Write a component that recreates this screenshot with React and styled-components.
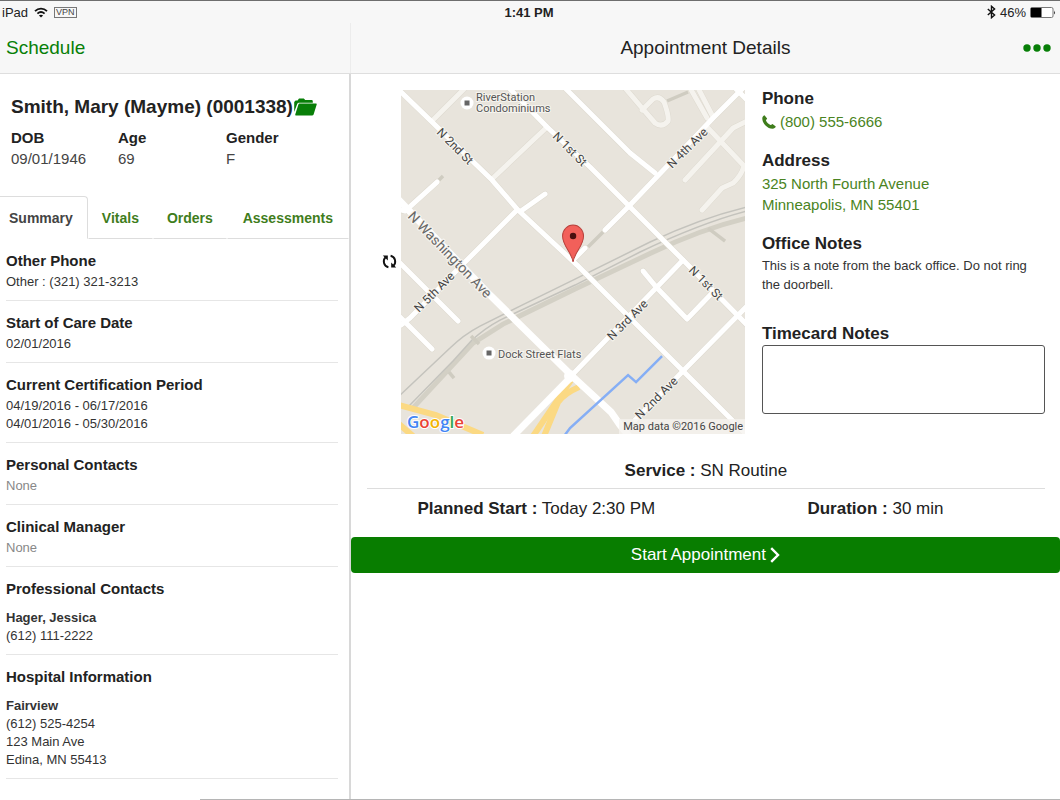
import React, { useState } from 'react';
import styled, { createGlobalStyle } from 'styled-components';

const tabs = ['Summary', 'Vitals', 'Orders', 'Assessments'];

const patientFacts = [
  { label: 'DOB', value: '09/01/1946' },
  { label: 'Age', value: '69' },
  { label: 'Gender', value: 'F' },
];

const sections = [
  { title: 'Other Phone', lines: ['Other : (321) 321-3213'] },
  { title: 'Start of Care Date', lines: ['02/01/2016'] },
  {
    title: 'Current Certification Period',
    lines: ['04/19/2016 - 06/17/2016', '04/01/2016 - 05/30/2016'],
  },
  { title: 'Personal Contacts', lines: [] },
  { title: 'Clinical Manager', lines: [] },
  { title: 'Professional Contacts', name: 'Hager, Jessica', lines: ['(612) 111-2222'] },
  {
    title: 'Hospital Information',
    name: 'Fairview',
    lines: ['(612) 525-4254', '123 Main Ave', 'Edina, MN 55413'],
  },
];

const GlobalStyle = createGlobalStyle`
  * {
    box-sizing: border-box;
  }

  body {
    margin: 0;
    background-color: #fff;
    color: #222;
    font-family: "Liberation Sans", Arial, sans-serif;
    font-size: 15px;
  }

  button {
    font-family: inherit;
    cursor: pointer;
  }

  h1, h2, h3, p, dl, dd {
    margin: 0;
  }
`;

const Page = styled.div`
  min-height: 100vh;
  display: flex;
  flex-direction: column;
`;

const TopBar = styled.header`
  background-color: #f7f7f7;
  border-top: 1px solid #6e6e6e;
  border-bottom: 1px solid #dedede;
`;

const StatusBar = styled.div`
  display: grid;
  grid-template-columns: 1fr auto 1fr;
  align-items: center;
  height: 22px;
  padding: 0 4px 0 2px;
  font-size: 13px;
  color: #222;
`;

const StatusGroup = styled.div`
  display: flex;
  align-items: center;
  gap: ${props => props.$gap};
  justify-content: ${props => (props.$end ? 'flex-end' : 'flex-start')};
`;

const Clock = styled.span`
  font-weight: 700;
`;

const VpnBadge = styled.span`
  border: 1px solid #777;
  padding: 0 1px;
  font-size: 9px;
  line-height: 9px;
  color: #444;
`;

const NavBar = styled.nav`
  display: grid;
  grid-template-columns: calc(33% + 1px) 1fr;
  height: 50px;
`;

const NavLeft = styled.div`
  display: flex;
  align-items: center;
  padding-left: 6px;
  border-right: 1px solid #ececec;
`;

const NavRight = styled.div`
  display: grid;
  grid-template-columns: 40px 1fr 40px;
  align-items: center;
`;

const BackLink = styled.a`
  color: #087f08;
  font-size: 19px;
  text-decoration: none;
`;

const PageTitle = styled.h1`
  grid-column: 2;
  text-align: center;
  font-size: 19px;
  font-weight: 400;
`;

const MenuButton = styled.button`
  display: flex;
  justify-content: flex-end;
  border: none;
  background: none;
  padding: 0 9px 0 0;
`;

const Body = styled.div`
  flex: 1;
  display: grid;
  grid-template-columns: calc(33% + 1px) 1fr;
`;

const Sidebar = styled.aside`
  border-right: 2px solid #d8d8d8;
`;

const Patient = styled.section`
  padding: 22px 11px 27px;
`;

const PatientName = styled.h2`
  display: flex;
  align-items: center;
  gap: 1px;
  font-size: 19px;
  line-height: 22px;
  white-space: nowrap;
`;

const FolderButton = styled.button`
  display: flex;
  border: none;
  background: none;
  padding: 0;
`;

const Facts = styled.dl`
  display: grid;
  grid-template-columns: 107px 108px 1fr;
  margin-top: 9px;
  line-height: 21px;

  dt {
    font-weight: 700;
  }

  dd {
    color: #444;
  }
`;

const TabList = styled.div`
  display: flex;
`;

const Tab = styled.button`
  height: 43px;
  padding: 0 13px;
  border: 1px solid transparent;
  border-bottom-color: #ddd;
  background: none;
  color: #3f7d1c;
  font-size: 14px;
  font-weight: 700;
  white-space: nowrap;

  &:first-child {
    padding: 0 14px 0 9px;
    border-left: none;
  }

  &:last-child {
    flex: 1;
  }

  &[aria-selected='true'] {
    color: #444;
    border-color: #ddd;
    border-bottom-color: transparent;
    border-radius: 0 4px 0 0;
  }
`;

const SectionList = styled.div`
  padding: 0 11px 0 6px;
`;

const Section = styled.section`
  padding: 12px 0 9px;
  border-bottom: 1px solid #e6e6e6;
`;

const SectionTitle = styled.h3`
  font-size: 15px;
  line-height: 20px;
  margin-bottom: ${props => (props.$spaced ? '10px' : '2px')};
`;

const Line = styled.p`
  font-size: 13px;
  line-height: 18px;
  font-weight: ${props => (props.$bold ? 700 : 400)};
  color: ${props => (props.$muted ? '#888' : '#333')};
`;

const Main = styled.main`
  padding-bottom: 16px;
`;

const Details = styled.div`
  display: grid;
  grid-template-columns: 34px minmax(0, 344fr) minmax(0, 300fr);
  padding: 14px 15px 0 16px;
`;

const RefreshButton = styled.button`
  align-self: center;
  display: flex;
  justify-content: flex-end;
  border: none;
  background: none;
  padding: 0 4px 0 0;
`;

const MapFrame = styled.div`
  padding-top: 2px;

  svg {
    display: block;
    width: 100%;
    height: auto;
  }
`;

const Info = styled.div`
  padding-left: 17px;
`;

const InfoBlock = styled.section`
  margin-bottom: ${props => (props.$wide ? '29px' : '18px')};
`;

const InfoTitle = styled.h3`
  font-size: 17px;
  line-height: 22px;
  margin-bottom: 1px;
`;

const InfoLink = styled.a`
  display: flex;
  align-items: center;
  gap: 4px;
  color: #4a8423;
  font-size: 15px;
  line-height: 21px;
  text-decoration: none;
`;

const Note = styled.p`
  font-size: 13px;
  line-height: 19px;
  color: #333;
`;

const NotesLabel = styled.label`
  display: block;
  font-size: 17px;
  font-weight: 700;
  line-height: 22px;
`;

const NotesInput = styled.textarea`
  display: block;
  width: 100%;
  height: 69px;
  border: 1px solid #555;
  border-radius: 3px;
  background-color: #fff;
  padding: 6px;
  font-family: inherit;
  font-size: 13px;
  resize: none;
`;

const Summary = styled.section`
  margin: 26px 15px 0 16px;
  font-size: 17px;
  line-height: 22px;
  text-align: center;
`;

const ServiceRow = styled.p`
  padding-bottom: 6px;
  border-bottom: 1px solid #ddd;
`;

const TimeRow = styled.div`
  display: grid;
  grid-template-columns: 1fr 1fr;
  padding: 9px 0 17px;
`;

const StartButton = styled.button`
  width: 100%;
  height: 36px;
  display: flex;
  align-items: center;
  justify-content: center;
  gap: 4px;
  border: none;
  border-radius: 4px;
  background-color: #087d00;
  color: #fff;
  font-size: 17px;
`;

const BottomEdge = styled.div`
  height: 1px;
  margin-left: 200px;
  background-color: #b5b5b5;
`;

const WifiIcon = () => (
  <svg width="14" height="11" viewBox="0 0 14 11" fill="none" stroke="#111" strokeWidth="1.8">
    <path d="M1 4.2 C4.5 0.8 9.5 0.8 13 4.2" />
    <path d="M3.4 6.6 C5.5 4.7 8.5 4.7 10.6 6.6" />
    <path d="M7 10.6 L4.9 8.5 C6.1 7.4 7.9 7.4 9.1 8.5 Z" fill="#111" stroke="none" />
  </svg>
);

const BluetoothIcon = () => (
  <svg width="9" height="14" viewBox="0 0 9 14" fill="none" stroke="#111" strokeWidth="1.4">
    <path d="M0.8 3.9 L7.6 10 L4.5 12.7 V1.3 L7.6 4 L0.8 10.1" />
  </svg>
);

const BatteryIcon = () => (
  <svg width="26" height="11" viewBox="0 0 26 11">
    <rect x="0.5" y="0.5" width="22.5" height="10" rx="1.5" fill="#fff" stroke="#777" />
    <rect x="1" y="1" width="10.5" height="9" fill="#000" />
    <path d="M24 3.5 Q25.8 5.5 24 7.5 Z" fill="#333" />
  </svg>
);

const DotsIcon = () => (
  <svg width="28" height="8" viewBox="0 0 28 8" fill="#087f08">
    <circle cx="4" cy="4" r="3.7" />
    <circle cx="14" cy="4" r="3.7" />
    <circle cx="24" cy="4" r="3.7" />
  </svg>
);

const FolderIcon = () => (
  <svg width="23" height="18" viewBox="0 0 23 18" fill="#087f08">
    <path d="M0.2 14 V4 L1.6 2.6 H3.6 L5 0.4 H9.8 L11.2 2 H17.6 Q18.8 2 18.8 3.2 V4.8 H4.6 L3.4 5.6 Z" />
    <path d="M5.4 5.6 H22 Q23 5.6 22.7 6.6 L19.6 16.4 Q19.2 17.5 18 17.5 H2 Q0.8 17.5 1.3 16.2 L4.4 6.4 Q4.7 5.6 5.4 5.6 Z" />
  </svg>
);

const PhoneIcon = () => (
  <svg width="14" height="14" viewBox="0 0 14 14" fill="#3f7d1c">
    <path d="M0.3 3.4 C0.3 1.8 1.2 0.7 2.5 0.2 L5.1 3.5 C5.2 4.2 3.9 4.6 4 5.4 C4.7 7.2 6.8 9.3 8.6 10 C9.4 10.1 9.8 8.8 10.5 8.9 L13.8 11.5 C13.3 12.8 12.2 13.6 10.6 13.7 C5.4 13.6 0.4 8.6 0.3 3.4 Z" />
  </svg>
);

const RefreshIcon = () => (
  <svg width="15" height="15" viewBox="0 0 15 15" fill="none" stroke="#111" strokeWidth="1.9">
    <path d="M6.4 13.2 C1.6 12.2 0.4 6.4 3.6 3.2" />
    <path d="M8.6 1.8 C13.4 2.8 14.6 8.6 11.4 11.8" />
    <path d="M0.8 1.4 H5.8 V6.4 Z" fill="#111" stroke="none" />
    <path d="M14.2 13.6 H9.2 V8.6 Z" fill="#111" stroke="none" />
  </svg>
);

const ChevronIcon = () => (
  <svg width="10" height="16" viewBox="0 0 10 16" fill="none" stroke="#fff" strokeWidth="2.4">
    <path d="M1.2 1.2 L8 8 L1.2 14.8" />
  </svg>
);

const roads = [
  'M-2 0 L91 90 L117 120 L176 175 L282 281 L345 344',
  'M108 -2 L146 37 L189 77 L228 116 L281 169 L346 235',
  'M164 -2 L209 43 L229 63 L254 83',
  'M346 -6 L312 28 L228 116 L204 140',
  'M334 -2 L346 10',
  'M184 158 L172 170',
  'M0 235 L9 228 L61 175 L116 120',
  'M120 121 L144 104',
  'M0 120 L4 121 L36 92',
  'M-2 172 L57 231',
  'M-2 226 L31 259',
  'M171 285 L282 170',
  'M242 181 L256 198 L286 229 L312 202',
  'M346 216 L282 281 L234 330',
];

const sideRoads = [
  'M32 30 L64 -2',
  'M91 89 L146 37',
  'M224 -2 L241 18 L254 33 Q261 38 267 31 Q268 26 263 12 Q258 5 252 9 L241 20',
  'M289 -2 L306 28 M297 -2 L312 27 M306 37 L343 76',
  'M346 31 L332 38 L284 90',
  'M343 76 Q340 86 332 93 L321 98 L301 120',
];

const StreetMap = () => (
  <svg viewBox="0 0 344 344" role="img" aria-label="Map of the visit address">
    <rect width="344" height="344" fill="#e8e4dc" />

    {/* railway */}
    <g fill="none">
      <path d="M10 320 L72 253 L102 234 L174 199 L250 163 Q300 139 346 128" stroke="#d3d0c5" strokeWidth="5" />
      <path d="M-2 306 L49 258 Q62 245 79 236 L121 215 L174 189 L249 152 Q300 128 346 117" stroke="#c4c3bd" strokeWidth="1.5" />
      <path d="M8 316 L52 271 L71 250 Q84 238 99 230 L174 195 L239 162 Q300 133 346 121" stroke="#c4c3bd" strokeWidth="1.5" />
      <path d="M307 138 L324 151 M203 141 L187 157 M36 92 L42 86 M266 11 L287 2 M70 246 L78 254 M48 282 L53 288" stroke="#cfccc1" strokeWidth="3.5" />
    </g>

    <g fill="none" stroke="#dedad0" strokeWidth="6" strokeLinecap="round" strokeLinejoin="round">
      {[...sideRoads, ...roads].map(d => <path key={d} d={d} />)}
    </g>
    <g fill="none" stroke="#f5f3ee" strokeWidth="5" strokeLinecap="round" strokeLinejoin="round">
      {sideRoads.map(d => <path key={d} d={d} />)}
    </g>
    <g fill="none" stroke="#fff" strokeWidth="5" strokeLinecap="round" strokeLinejoin="round">
      {roads.map(d => <path key={d} d={d} />)}
    </g>

    {/* highway ramps */}
    <g fill="none" stroke="#fbd983" strokeWidth="6">
      <path d="M170 290 L132 346" />
      <path d="M178 297 Q164 303 157 312 L143 346" />
      <path d="M-2 315 L35 325 L82 345" />
      <path d="M-2 334 L12 346" />
    </g>
    <g fill="none" stroke="#fff" strokeWidth="7">
      <path d="M-4 108 L89 205 L171 286 L210 322 L219 335 L228 346" />
      <path d="M171 286 L112 346" />
    </g>
    <circle cx="169" cy="286" r="6" fill="#fff" />
    <path d="M163 346 L169 338 L227 285 L235 292 L261 266" fill="none" stroke="#85aef5" strokeWidth="2.5" />

    <g fontFamily="Roboto, sans-serif" fontSize="12" fill="#444" stroke="#f6f4ef" strokeWidth="2" paintOrder="stroke">
      <text transform="translate(35 43) rotate(45)">N 2nd St</text>
      <text transform="translate(151 47) rotate(45)">N 1st St</text>
      <text transform="translate(271 79) rotate(-45)">N 4th Ave</text>
      <text transform="translate(18 223) rotate(-45)">N 5th Ave</text>
      <text transform="translate(287 181) rotate(45)">N 1st St</text>
      <text transform="translate(211 251) rotate(-45)">N 3rd Ave</text>
      <text transform="translate(239 330) rotate(-45)">N 2nd Ave</text>
      <text transform="translate(6 127) rotate(46)" fontSize="14" fill="#666">N Washington Ave</text>
    </g>

    <g fontFamily="Roboto, sans-serif" fontSize="11" fill="#555" stroke="#f6f4ef" strokeWidth="2" paintOrder="stroke">
      <text x="75" y="11">RiverStation</text>
      <text x="75" y="22">Condominiums</text>
      <text x="97" y="268">Dock Street Flats</text>
    </g>
    <g fill="#fff">
      <circle cx="66" cy="13" r="6.5" />
      <circle cx="88" cy="263" r="6.5" />
    </g>
    <path d="M63.5 10.5 h5 v5 h-5 Z M85.5 260.5 h5 v5 h-5 Z" fill="#666" />

    {/* pin */}
    <path d="M172 172 C171 163 161.500 156 161.500 146 A10.500 11 0 0 1 182.500 146 C182.500 156 173 163 172 172 Z" fill="#f2605a" stroke="#b8423d" />
    <circle cx="172" cy="146" r="3.2" fill="#4a0f0f" />

    <text x="6" y="338" fontFamily="'Open Sans', sans-serif" fontSize="17" fontWeight="600" stroke="#fff" strokeWidth="2" paintOrder="stroke">
      <tspan fill="#4285f4">G</tspan>
      <tspan fill="#ea4335">o</tspan>
      <tspan fill="#f4b400">o</tspan>
      <tspan fill="#4285f4">g</tspan>
      <tspan fill="#34a853">l</tspan>
      <tspan fill="#ea4335">e</tspan>
    </text>

    <rect x="218" y="329" width="126" height="15" fill="#f5f3ef" fillOpacity="0.8" />
    <text x="342" y="340" textAnchor="end" fontFamily="Roboto, sans-serif" fontSize="11" fill="#444">
      Map data ©2016 Google
    </text>
  </svg>
);

const PatientSection = ({ title, name, lines }) => (
  <Section>
    <SectionTitle $spaced={Boolean(name)}>{title}</SectionTitle>
    {name && <Line $bold>{name}</Line>}
    {lines.map(line => <Line key={line}>{line}</Line>)}
    {lines.length === 0 && <Line $muted>None</Line>}
  </Section>
);

const App = () => {
  const [activeTab, setActiveTab] = useState('Summary');
  const [notes, setNotes] = useState('');

  return (
    <Page>
      <GlobalStyle />
      <TopBar>
        <StatusBar>
          <StatusGroup $gap="6px">
            <span>iPad</span>
            <WifiIcon />
            <VpnBadge>VPN</VpnBadge>
          </StatusGroup>
          <Clock>1:41 PM</Clock>
          <StatusGroup $gap="4px" $end>
            <BluetoothIcon />
            <span>46%</span>
            <BatteryIcon />
          </StatusGroup>
        </StatusBar>
        <NavBar>
          <NavLeft>
            <BackLink href="#schedule">Schedule</BackLink>
          </NavLeft>
          <NavRight>
            <PageTitle>Appointment Details</PageTitle>
            <MenuButton aria-label="More"><DotsIcon /></MenuButton>
          </NavRight>
        </NavBar>
      </TopBar>

      <Body>
        <Sidebar>
          <Patient>
            <PatientName>
              Smith, Mary (Mayme) (0001338)
              <FolderButton aria-label="Open chart"><FolderIcon /></FolderButton>
            </PatientName>
            <Facts>
              {patientFacts.map(fact => (
                <div key={fact.label}>
                  <dt>{fact.label}</dt>
                  <dd>{fact.value}</dd>
                </div>
              ))}
            </Facts>
          </Patient>

          <TabList role="tablist">
            {tabs.map(tab => (
              <Tab
                key={tab}
                role="tab"
                aria-selected={activeTab === tab}
                onClick={() => setActiveTab(tab)}
              >
                {tab}
              </Tab>
            ))}
          </TabList>

          <SectionList>
            {sections.map(section => (
              <PatientSection key={section.title} {...section} />
            ))}
          </SectionList>
        </Sidebar>

        <Main>
          <Details>
            <RefreshButton aria-label="Refresh map"><RefreshIcon /></RefreshButton>
            <MapFrame><StreetMap /></MapFrame>
            <Info>
              <InfoBlock>
                <InfoTitle>Phone</InfoTitle>
                <InfoLink href="tel:8005556666"><PhoneIcon />(800) 555-6666</InfoLink>
              </InfoBlock>
              <InfoBlock>
                <InfoTitle>Address</InfoTitle>
                <InfoLink href="#directions">
                  325 North Fourth Avenue<br />
                  Minneapolis, MN 55401
                </InfoLink>
              </InfoBlock>
              <InfoBlock $wide>
                <InfoTitle>Office Notes</InfoTitle>
                <Note>This is a note from the back office. Do not ring the doorbell.</Note>
              </InfoBlock>
              <NotesLabel htmlFor="timecard-notes">Timecard Notes</NotesLabel>
              <NotesInput
                id="timecard-notes"
                value={notes}
                onChange={e => setNotes(e.target.value)}
              />
            </Info>
          </Details>

          <Summary>
            <ServiceRow><b>Service :</b> SN Routine</ServiceRow>
            <TimeRow>
              <p><b>Planned Start :</b> Today 2:30 PM</p>
              <p><b>Duration :</b> 30 min</p>
            </TimeRow>
          </Summary>
          <StartButton>Start Appointment<ChevronIcon /></StartButton>
        </Main>
      </Body>
      <BottomEdge />
    </Page>
  );
};

export default App;
